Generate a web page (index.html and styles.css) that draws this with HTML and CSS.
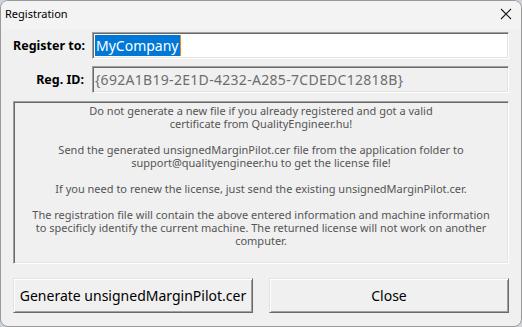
FILE: index.html
```html
<!DOCTYPE html>
<html>
<head>
<meta charset="utf-8">
<link rel="stylesheet" href="styles.css">
</head>
<body>
<div class="window">
  <div class="titlebar">
    <span class="title">Registration</span>
    <span class="close">
      <svg width="12" height="12" viewBox="0 0 12 12"><path d="M1 1 L11 11 M11 1 L1 11" stroke="#1a1a1a" stroke-width="1.1" fill="none"/></svg>
    </span>
  </div>
  <div class="client">
    <div class="row">
      <label class="lbl">Register to:</label>
      <div class="field edit"><span class="sel">MyCompany</span><span class="caret"></span></div>
    </div>
    <div class="row">
      <label class="lbl">Reg. ID:</label>
      <div class="field ro">{692A1B19-2E1D-4232-A285-7CDEDC12818B}</div>
    </div>
    <div class="memo">
      <p>Do not generate a new file if you already registered and got a valid<br>certificate from QualityEngineer.hu!</p>
      <p>Send the generated unsignedMarginPilot.cer file from the application folder to<br>support@qualityengineer.hu to get the license file!</p>
      <p>If you need to renew the license, just send the existing unsignedMarginPilot.cer.</p>
      <p>The registration file will contain the above entered information and machine information<br>to specificly identify the current machine. The returned license will not work on another<br>computer.</p>
    </div>
    <div class="buttons">
      <button class="btn">Generate unsignedMarginPilot.cer</button>
      <button class="btn">Close</button>
    </div>
  </div>
</div>
</body>
</html>
```

FILE: styles.css
```css
* { box-sizing: border-box; }
html, body { margin: 0; padding: 0; }
body {
  width: 522px;
  height: 327px;
  background: #cfd3d8;
  font-family: "Noto Sans", "Open Sans", sans-serif;
  overflow: hidden;
}
.window {
  width: 522px;
  height: 327px;
  background: #f0f0f0;
  border: 1px solid #9a9a9a;
  border-radius: 8px;
  display: flex;
  flex-direction: column;
  overflow: hidden;
}
.titlebar {
  height: 28px;
  background: #f3f3f3;
  display: flex;
  align-items: center;
  justify-content: space-between;
  padding: 0 8px 3px 4px;
  flex: none;
}
.title {
  font-size: 11px;
  color: #000;
}
.close {
  display: flex;
  align-items: center;
  padding-right: 1px;
}
.client {
  padding: 3px 12px 0 12px;
  display: flex;
  flex-direction: column;
}
.row {
  display: flex;
  align-items: center;
  margin-bottom: 7px;
}
.lbl {
  width: 71px;
  flex: none;
  white-space: nowrap;
  text-align: right;
  font-weight: bold;
  font-size: 12.5px;
  margin-right: 8px;
  color: #000;
}
.field {
  flex: 1;
  height: 27px;
  border: 1px solid;
  border-color: #a0a0a0 #ffffff #ffffff #a0a0a0;
  box-shadow: inset 1px 1px 0 #696969, inset -1px -1px 0 #e3e3e3;
  font-size: 14px;
  display: flex;
  align-items: center;
  padding: 0 2px;
  white-space: nowrap;
}
.edit { background: #fff; }
.sel {
  background: #0078d7;
  color: #fff;
  line-height: 21px;
  padding: 0 1px;
}
.caret {
  width: 1px;
  height: 21px;
  background: #e8891e;
}
.ro {
  background: #f0f0f0;
  color: #6d6d6d;
  letter-spacing: 0.3px;
}
.memo {
  height: 163px;
  margin-top: 1px;
  border: 1px solid;
  border-color: #a0a0a0 #ffffff #ffffff #a0a0a0;
  box-shadow: inset 1px 1px 0 #696969, inset -1px -1px 0 #e3e3e3;
  background: #f0f0f0;
  color: #555;
  font-size: 11px;
  line-height: 13px;
  text-align: center;
  padding: 2px 4px;
}
.memo p { margin: 0 0 13px 0; }
.buttons {
  display: flex;
  justify-content: space-between;
  margin-top: 14px;
}
.btn {
  width: 240px;
  height: 35px;
  background: #f0f0f0;
  border: 1px solid;
  border-color: #e3e3e3 #696969 #696969 #e3e3e3;
  box-shadow: inset 1px 1px 0 #ffffff, inset -1px -1px 0 #a0a0a0;
  font-family: "Noto Sans", "Open Sans", sans-serif;
  font-size: 14px;
  color: #000;
  padding: 0;
}
```
